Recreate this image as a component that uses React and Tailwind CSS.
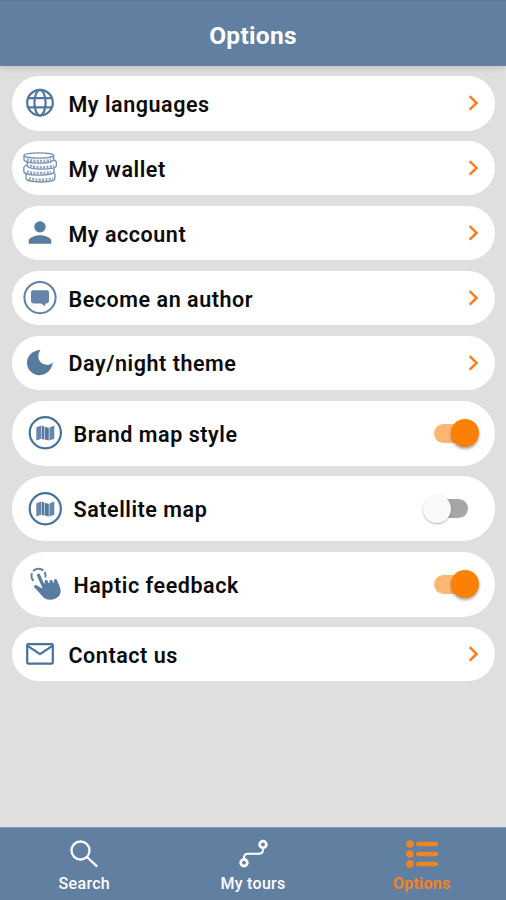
import { MdPerson } from 'react-icons/md';

function GlobeIcon() {
  return (
    <svg width="34" height="34" viewBox="0 0 34 34" fill="none" stroke="#50779f" strokeWidth="2.2">
      <circle cx="17" cy="16.7" r="12.8" />
      <ellipse cx="17" cy="16.7" rx="5.6" ry="12.8" />
      <path d="M5.2 12.200h23.6M5.2 21.400h23.6" />
    </svg>
  );
}

function CoinsIcon() {
  return (
    <svg width="34" height="34" viewBox="0 0 34 34" fill="none" stroke="#7590b0" strokeWidth="1.3">
      <ellipse cx="15.8" cy="4.5" rx="14.8" ry="2.6" />
      <path d="M1 4.500v4c0 2 6 3.600 15 3.600s14.600-1.600 14.600-3.600v-4" />
      <path d="M30.500 9c2 .5 2.900 1.200 2.900 2.100v3.400c0 2.200-6 3.600-14.800 3.600-8.600 0-14.300-1.400-14.300-3.300v-4" />
      <path d="M4.300 14C2.400 14.700.8 15.500.8 16.500v4c0 2.200 6 3.700 14.800 3.700s15.400-1.500 15.400-3.700V17" />
      <path d="M3 23v4.300c0 2.200 6 3.700 14.800 3.700s14.200-1.500 14.200-3.700v-4c0-1-.6-1.700-1.700-2.300" />
      <path
        stroke="#8fa8c2"
        strokeDasharray="2 1.300"
        strokeWidth="2.800"
        d="M4 8.700c6 2 18 2 24 0M7 14.800c6 2 18 2 24 0M4 20.700c6 2 18 2 24 0M6 27.300c6 2 18 2 24 0"
      />
    </svg>
  );
}

function AuthorIcon() {
  return (
    <svg width="34" height="34" viewBox="0 0 34 34" fill="none">
      <circle cx="17" cy="16.6" r="15.6" stroke="#5f7fa3" strokeWidth="2" />
      <path
        fill="#6484a8"
        d="M10.300 9.300h13.400q2.300 0 2.300 2.300v8.500q0 2.300-2.300 2.300h-1.500v3.200l-4-3.200h-7.900Q8 22.400 8 20.100v-8.500q0-2.300 2.300-2.300Z"
      />
    </svg>
  );
}

function MoonIcon() {
  return (
    <svg width="34" height="34" viewBox="0 0 34 34" fill="#587a9f">
      <path d="M17.500 4.100C9.500 4.400 4 10 4 16.800 4 23.800 9.500 29.200 16.500 29.200c6.700 0 12.300-5 13.300-12.600-2.300 2-4.300 2.600-6.700 2.200-4-.6-6.700-3-7.500-6-.7-3-.1-6.200 1.900-8.700Z" />
    </svg>
  );
}

function MapIcon() {
  return (
    <svg width="34" height="34" viewBox="0 0 34 34" fill="none">
      <circle cx="17.300" cy="16.700" r="15.600" stroke="#44729d" strokeWidth="2.200" />
      <path fill="#6787aa" d="M8.300 11.200l4.900-1.700v13.200l-4.900 1.700ZM21.400 11.400l4.900-1.900v13.200l-4.900 1.900Z" />
      <path fill="#54799f" d="M13.700 9.500l2.600 1v13.300l-2.600-1ZM16.900 10.700l3.900 1.200v12.600l-3.900-1Z" />
    </svg>
  );
}

function TouchIcon() {
  return (
    <svg width="34" height="34" viewBox="0 0 34 34" fill="none" strokeLinecap="round">
      <path
        stroke="#5f81a6"
        strokeWidth="2"
        strokeLinecap="butt"
        d="M5.600 13.800A7.200 7.200 0 0 1 4 6.100M5.200 4.200A7.200 7.200 0 0 1 15.400 3.500M16.500 5A7.200 7.200 0 0 1 17.300 10.500"
      />
      <path stroke="#587ca2" strokeWidth="3.300" d="M10.500 8.200l6 13.500M18.200 14.600l2.500 6M23 14.600l2 6M27.500 13.800l2 6M7.800 19.800l7 4" />
      <path
        fill="#587ca2"
        d="M14.500 16.500l4.500-.2 4.500-.3 5.500-1c2.300 2.500 3.500 6 3.600 9 .2 4.500-3.700 7.900-8.500 8.500-4 .6-7.600-.3-9.800-3.200L8 22l7-.5Z"
      />
    </svg>
  );
}

function MailIcon() {
  return (
    <svg width="34" height="34" viewBox="0 0 34 34" fill="none" stroke="#44729d" strokeWidth="2.200" strokeLinejoin="round">
      <rect x="4.200" y="7.200" width="25.600" height="19.400" rx="1" />
      <path d="M4.600 8.800L17 17.200L29.400 8.800" />
    </svg>
  );
}

function Chevron() {
  return (
    <svg className="mr-4" width="11" height="16" viewBox="0 0 11 16" fill="none" stroke="#fa7d1e" strokeWidth="2.500">
      <path d="M1.600 1.200L8.600 7.900L1.600 14.600" />
    </svg>
  );
}

function Toggle({ on }) {
  return on ? (
    <div className="mr-[15px] flex h-7 w-[46px] items-center rounded-full">
      <div className="h-[19px] w-8 shrink-0 rounded-full bg-[#ffb672]" />
      <div className="-ml-[15px] size-7 shrink-0 rounded-full bg-[#fb8003] shadow-[0_2px_3px_rgba(0,0,0,0.35)]" />
    </div>
  ) : (
    <div className="mr-[26px] flex h-7 w-[46px] items-center rounded-full">
      <div className="z-10 size-7 shrink-0 rounded-full bg-[#fafafa] shadow-[0_1px_2px_rgba(0,0,0,0.3)]" />
      <div className="-ml-[15px] h-[19px] w-8 shrink-0 rounded-full bg-[#a6a6a6]" />
    </div>
  );
}

const rows = [
  { label: 'My languages', icon: <GlobeIcon /> },
  { label: 'My wallet', icon: <CoinsIcon /> },
  { label: 'My account', icon: <MdPerson className="-mt-0.5 size-[35px] text-[#587ca0]" /> },
  { label: 'Become an author', icon: <AuthorIcon /> },
  { label: 'Day/night theme', icon: <MoonIcon /> },
  { label: 'Brand map style', icon: <MapIcon />, toggle: true, on: true },
  { label: 'Satellite map', icon: <MapIcon />, toggle: true, on: false },
  { label: 'Haptic feedback', icon: <TouchIcon />, toggle: true, on: true },
  { label: 'Contact us', icon: <MailIcon /> },
];

function OptionRow({ row }) {
  return (
    <li
      className={`flex shrink-0 items-center rounded-full bg-white ${
        row.toggle ? 'h-[64.8px] pl-4' : 'h-[54.2px] pl-[11px]'
      }`}
    >
      <span className="flex w-[34px] shrink-0 justify-center">{row.icon}</span>
      <span className="ml-[11.5px] flex-1 whitespace-nowrap pt-[3px] text-[21.5px] font-semibold leading-7 tracking-[0.55px] text-[#0b0b0b]">
        {row.label}
      </span>
      {row.toggle ? <Toggle on={row.on} /> : <Chevron />}
    </li>
  );
}

export default function App() {
  return (
    <div className="flex h-[900px] w-[506px] flex-col overflow-hidden bg-[#dfdfdf] font-['Roboto',sans-serif]">
      <header className="z-10 flex h-[66px] shrink-0 items-center justify-center border-t border-[#557593] bg-[#6180a1] pt-1 shadow-[0_1px_7px_rgba(0,0,0,0.18)]">
        <h1 className="text-[24.5px] font-bold leading-8 tracking-[0.3px] text-white">Options</h1>
      </header>

      <ul className="flex flex-1 flex-col gap-[10.7px] pl-3 pr-[11px] pt-[10.4px]">
        {rows.map((row) => (
          <OptionRow key={row.label} row={row} />
        ))}
      </ul>

      <nav className="grid h-[73px] shrink-0 grid-cols-3 border-t border-[#8299b0] bg-[#6180a1] text-[16px] leading-5 text-white">
        <div className="flex flex-col items-center pt-[11px] font-medium">
          <svg width="30" height="30" viewBox="0 0 30 30" fill="none" stroke="#fff" strokeWidth="2.300">
            <circle cx="11.500" cy="11.500" r="9" />
            <path d="M18 18l10.200 9.700" />
          </svg>
          <span className="mt-[5px] tracking-[0.3px]">Search</span>
        </div>
        <div className="flex flex-col items-center pt-[11px] font-medium">
          <svg width="30" height="30" viewBox="0 0 30 30" fill="none" stroke="#fff" strokeWidth="2.800">
            <circle cx="25" cy="5.500" r="3.300" />
            <circle cx="6" cy="23.700" r="3.300" />
            <path strokeWidth="2" d="M25 9v1.700q0 4-4 4H10q-4 0-4 4V20.500" />
          </svg>
          <span className="mt-[5px] tracking-[0.3px]">My tours</span>
        </div>
        <div className="flex flex-col items-center pt-[11px] font-bold text-[#ef8326]">
          <svg width="34" height="30" viewBox="0 0 34 30" fill="currentColor">
            <circle cx="5" cy="5" r="3.800" />
            <circle cx="5" cy="15" r="3.800" />
            <circle cx="5" cy="25" r="3.800" />
            <rect x="11" y="2.700" width="22" height="4.600" rx="2" />
            <rect x="11" y="12.700" width="22" height="4.600" rx="2" />
            <rect x="11" y="22.700" width="22" height="4.600" rx="2" />
          </svg>
          <span className="mt-[5px] tracking-[0.2px]">Options</span>
        </div>
      </nav>
    </div>
  );
}
